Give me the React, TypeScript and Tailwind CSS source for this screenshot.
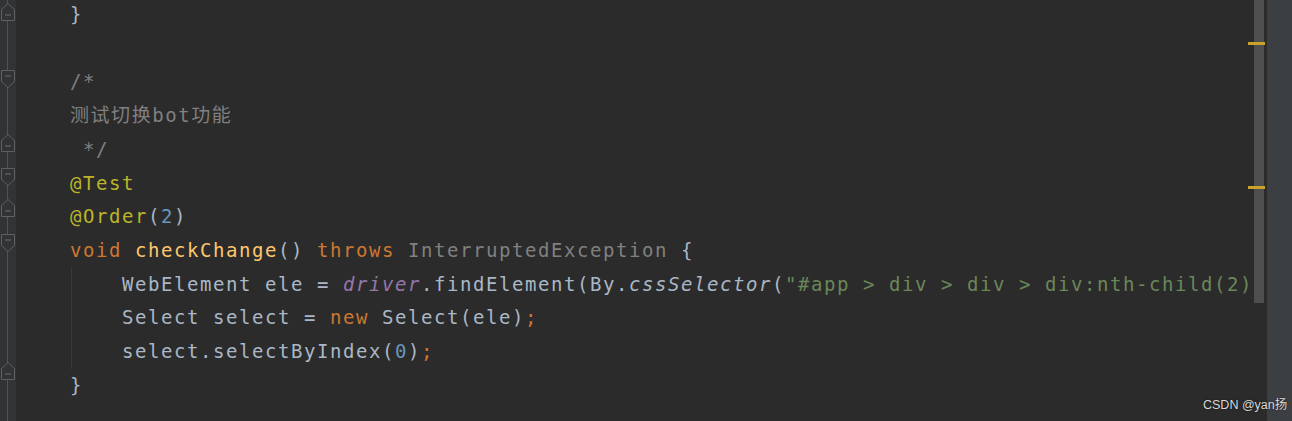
import React from "react";

type Tok = { t: string; c?: string; i?: boolean };
type Fold = "start" | "end" | null;

const TXT = "text-[#a9b7c6]";
const KW = "text-[#cc7832]";
const CMT = "text-[#808080]";
const ANN = "text-[#bbb529]";
const NUM = "text-[#6897bb]";
const STR = "text-[#6a8759]";
const FN = "text-[#ffc66d]";
const FLD = "text-[#9876aa]";

const lines: { fold: Fold; toks: Tok[] }[] = [
  { fold: "end", toks: [{ t: "}", c: TXT }] },
  { fold: null, toks: [] },
  { fold: "start", toks: [{ t: "/*", c: CMT }] },
  { fold: null, toks: [{ t: "测试切换bot功能", c: CMT }] },
  { fold: "end", toks: [{ t: " */", c: CMT }] },
  { fold: "start", toks: [{ t: "@Test", c: ANN }] },
  {
    fold: "end",
    toks: [
      { t: "@Order", c: ANN },
      { t: "(", c: TXT },
      { t: "2", c: NUM },
      { t: ")", c: TXT },
    ],
  },
  {
    fold: "start",
    toks: [
      { t: "void ", c: KW },
      { t: "checkChange", c: FN },
      { t: "() ", c: TXT },
      { t: "throws ", c: KW },
      { t: "InterruptedException", c: CMT },
      { t: " {", c: TXT },
    ],
  },
];

const body: Tok[][] = [
  [
    { t: "WebElement ele = ", c: TXT },
    { t: "driver", c: FLD, i: true },
    { t: ".findElement(By.", c: TXT },
    { t: "cssSelector", c: TXT, i: true },
    { t: "(", c: TXT },
    { t: '"#app > div > div > div:nth-child(2)', c: STR },
  ],
  [
    { t: "Select select = ", c: TXT },
    { t: "new ", c: KW },
    { t: "Select(ele)", c: TXT },
    { t: ";", c: KW },
  ],
  [
    { t: "select.selectByIndex(", c: TXT },
    { t: "0", c: NUM },
    { t: ")", c: TXT },
    { t: ";", c: KW },
  ],
];

const FoldMark = ({ kind }: { kind: Fold }) => {
  if (!kind) return null;
  const d =
    kind === "start"
      ? "M1.5 0.5 H14.5 V11.5 L8 17.5 L1.5 11.5 Z"
      : "M1.5 17.5 H14.5 V6.5 L8 0.5 L1.5 6.5 Z";
  const my = kind === "start" ? 6 : 12;
  return (
    <svg
      width="16"
      height="18"
      viewBox="0 0 16 18"
      className={kind === "start" ? "relative z-10 mt-[3px]" : "relative z-10 -mt-[1px]"}
    >
      <path d={d} fill="#313335" stroke="#5e6062" strokeWidth="1" />
      <path d={`M5 ${my} H11`} stroke="#6a6c6e" strokeWidth="1" />
    </svg>
  );
};

const GutterCell = ({ fold }: { fold: Fold }) => (
  <div className="relative flex h-[33.73px] items-center justify-center">
    <div className="absolute left-[7px] top-0 h-full w-[1px] bg-[#505254]" />
    <FoldMark kind={fold} />
  </div>
);

const Code = ({ toks }: { toks: Tok[] }) => (
  <div className="h-[33.73px] whitespace-pre leading-[33.73px]">
    {toks.map((k, n) => (
      <span key={n} className={`${k.c ?? TXT} ${k.i ? "italic" : ""}`}>
        {k.t}
      </span>
    ))}
  </div>
);

export default function App() {
  const folds: Fold[] = [...lines.map((l) => l.fold), null, null, null, "end", null];
  return (
    <div className="relative flex h-[421px] w-[1292px] overflow-hidden bg-[#2b2b2b]">
      {/* gutter */}
      <div className="-mt-[4px] flex w-[16px] shrink-0 flex-col bg-[#313335]">
        {folds.map((f, n) => (
          <GutterCell key={n} fold={f} />
        ))}
      </div>

      {/* editor */}
      <div
        className="-mt-[2px] flex min-w-0 flex-1 flex-col overflow-hidden pl-[54px] text-[19px] tracking-[1.56px]"
        style={{ fontFamily: '"DejaVu Sans Mono", "Noto Sans CJK SC", monospace' }}
      >
        {lines.map((l, n) => (
          <Code key={n} toks={l.toks} />
        ))}
        <div className="ml-[1px] border-l border-[#3a3a3a] pl-[50px]">
          {body.map((b, n) => (
            <Code key={n} toks={b} />
          ))}
        </div>
        <Code toks={[{ t: "}", c: TXT }]} />
      </div>

      {/* scrollbar */}
      <div className="relative w-[10px] shrink-0">
        <div className="h-[303px] bg-[#4e4e4e]" />
      </div>
      <div className="w-[3px] shrink-0" />
      <div className="w-[25px] shrink-0 bg-[#3c3f41]" />

      {/* error stripe marks */}
      <div className="absolute left-[1248px] top-[42px] h-[3px] w-[17px] bg-[#c9a227]" />
      <div className="absolute left-[1248px] top-[186px] h-[3px] w-[17px] bg-[#c9a227]" />

      {/* watermark */}
      <div
        className="absolute left-[1203px] top-[396px] text-[12.5px] text-[#d8d8d8] [text-shadow:0_0_2px_rgba(0,0,0,0.6)]"
        style={{ fontFamily: '"Liberation Sans", "Noto Sans CJK SC", sans-serif' }}
      >
        CSDN @yan扬
      </div>
    </div>
  );
}
